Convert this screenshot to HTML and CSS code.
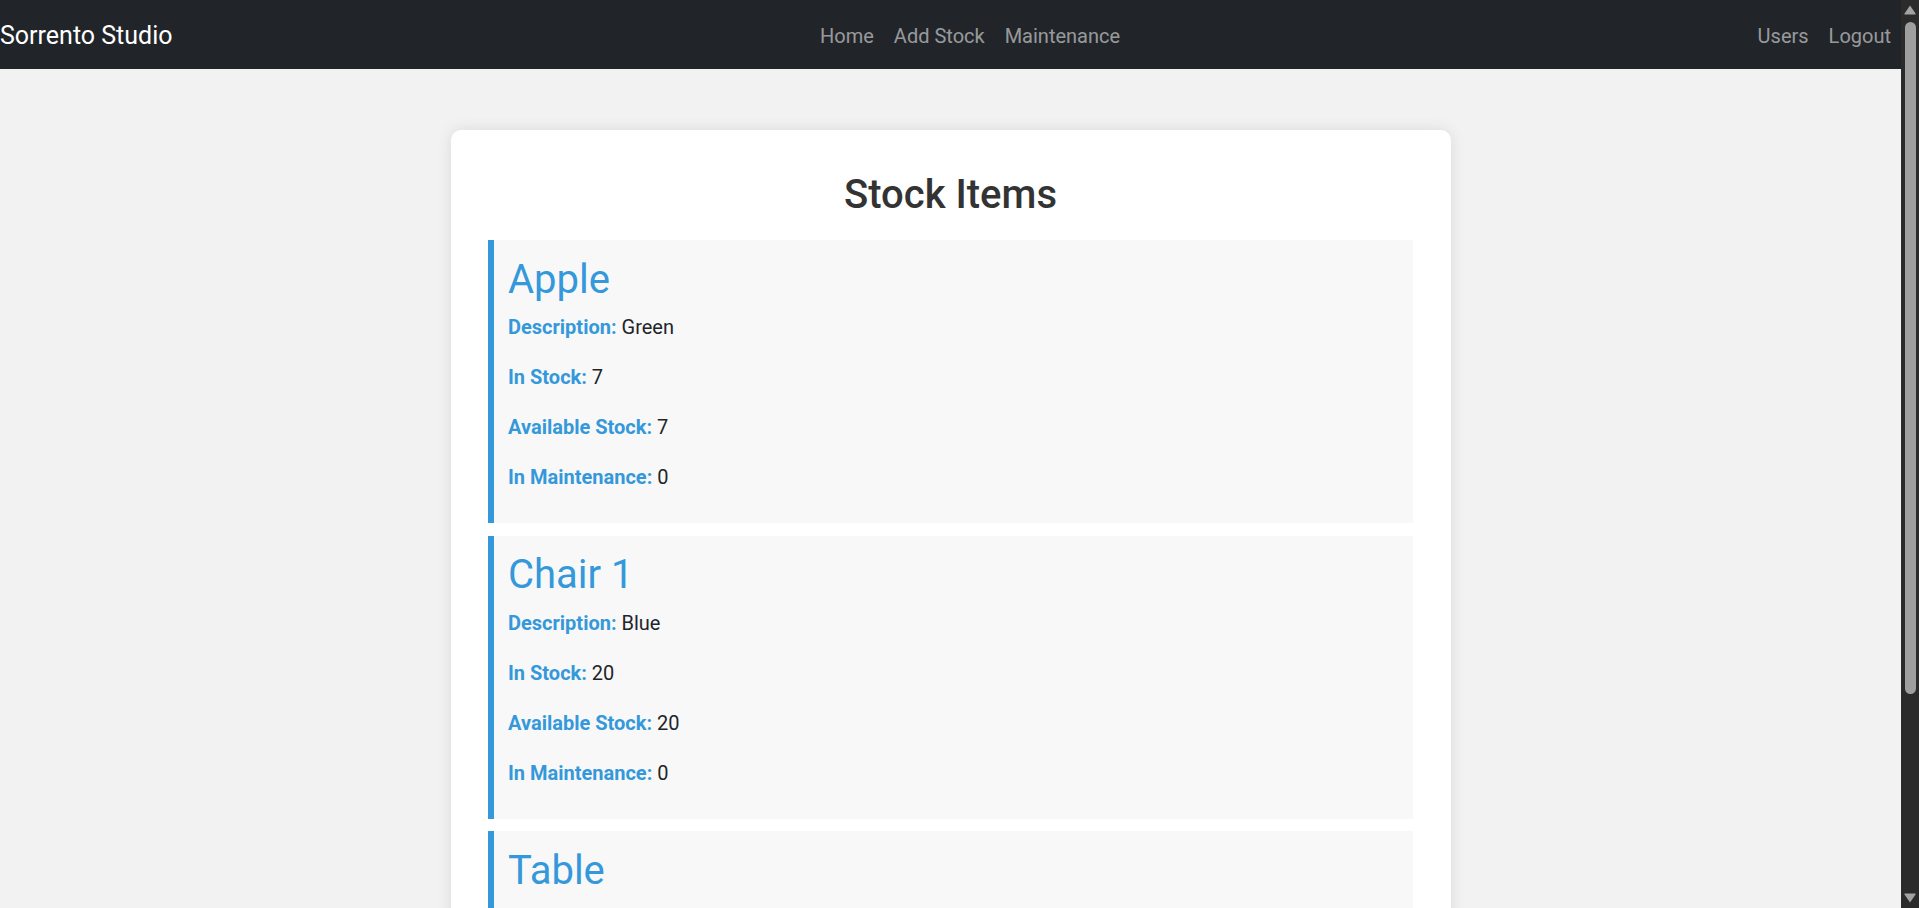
FILE: index.html
```html
<!DOCTYPE html>
<html lang="en">
<head>
<meta charset="utf-8">
<title>Stock Items - Sorrento Studio</title>
<link rel="stylesheet" href="styles.css">
</head>
<body>
<nav class="navbar">
  <a class="brand" href="#">Sorrento Studio</a>
  <ul class="nav nav-center">
    <li><a class="nav-link" href="#">Home</a></li>
    <li><a class="nav-link" href="#">Add Stock</a></li>
    <li><a class="nav-link" href="#">Maintenance</a></li>
  </ul>
  <ul class="nav nav-right">
    <li><a class="nav-link" href="#">Users</a></li>
    <li><a class="nav-link" href="#">Logout</a></li>
  </ul>
</nav>
<main class="card">
  <h2 class="page-title">Stock Items</h2>
  <section class="item">
    <h3 class="item-name">Apple</h3>
    <p><strong>Description:</strong> Green</p>
    <p><strong>In Stock:</strong> 7</p>
    <p><strong>Available Stock:</strong> 7</p>
    <p><strong>In Maintenance:</strong> 0</p>
  </section>
  <section class="item">
    <h3 class="item-name">Chair 1</h3>
    <p><strong>Description:</strong> Blue</p>
    <p><strong>In Stock:</strong> 20</p>
    <p><strong>Available Stock:</strong> 20</p>
    <p><strong>In Maintenance:</strong> 0</p>
  </section>
  <section class="item">
    <h3 class="item-name">Table</h3>
    <p><strong>Description:</strong> Wooden</p>
    <p><strong>In Stock:</strong> 5</p>
    <p><strong>Available Stock:</strong> 5</p>
    <p><strong>In Maintenance:</strong> 0</p>
  </section>
</main>
<div class="scrollbar" aria-hidden="true">
  <div class="sb-btn">
    <svg width="18" height="19" viewBox="0 0 18 19"><path d="M9 5.5 L14.5 13.5 Q15 14.5 14 14.5 L4 14.5 Q3 14.5 3.5 13.5 Z" fill="#a3a3a3"/></svg>
  </div>
  <div class="sb-track"><div class="sb-thumb"></div></div>
  <div class="sb-btn">
    <svg width="18" height="19" viewBox="0 0 18 19"><path d="M9 13.5 L14.5 5.5 Q15 4.5 14 4.5 L4 4.5 Q3 4.5 3.5 5.5 Z" fill="#a3a3a3"/></svg>
  </div>
</div>
</body>
</html>
```
FILE: styles.css
```css
html {
  background: #f2f2f2;
}
body {
  margin: 0;
  padding-right: 18px;
  background: #f2f2f2;
  font-family: Roboto, "Liberation Sans", sans-serif;
  color: #212529;
}

.navbar {
  display: flex;
  align-items: center;
  height: 69px;
  background: #212529;
}
.brand {
  font-size: 25px;
  line-height: 37px;
  padding-top: 2px;
  color: #fff;
  text-decoration: none;
  margin-right: 20px;
  white-space: nowrap;
}
.nav {
  display: flex;
  list-style: none;
  margin: 0;
  padding: 0;
}
.nav-center {
  margin: 0 auto;
}
.nav-link {
  display: block;
  padding: 11px 10px 9px;
  font-size: 20px;
  line-height: 30px;
  color: rgba(255, 255, 255, 0.55);
  text-decoration: none;
}

.card {
  width: 1000px;
  box-sizing: border-box;
  margin: 61px auto 22px;
  padding: 37.5px 37.5px 25px;
  background: #fff;
  border-radius: 10px;
  box-shadow: 0 0 15px rgba(0, 0, 0, 0.1);
}
.page-title {
  margin: 0 0 21.5px;
  padding-top: 3px;
  text-align: center;
  font-size: 40px;
  line-height: 48px;
  font-weight: 500;
  color: #333;
}
.item {
  margin-bottom: 12.5px;
  padding: 12.5px 14px;
  background: #f8f8f8;
  border-left: 6px solid #3498db;
}
.item-name {
  margin: 0 0 7px;
  padding-top: 3px;
  font-size: 40px;
  line-height: 48px;
  font-weight: 400;
  color: #3498db;
}
.item p {
  margin: 0 0 18.5px;
  padding-top: 1.5px;
  font-size: 20px;
  line-height: 30px;
}
.item strong {
  color: #3498db;
  font-weight: 700;
}

.scrollbar {
  position: fixed;
  top: 0;
  right: 0;
  width: 18px;
  height: 100vh;
  display: flex;
  flex-direction: column;
  background: #2b2b2b;
}
.sb-btn {
  height: 19px;
  flex: none;
}
.sb-btn svg {
  display: block;
}
.sb-track {
  flex: 1;
  padding-top: 3px;
}
.sb-thumb {
  width: 11px;
  height: 672px;
  margin-left: 4px;
  border-radius: 6px;
  background: #9f9f9f;
}
```
